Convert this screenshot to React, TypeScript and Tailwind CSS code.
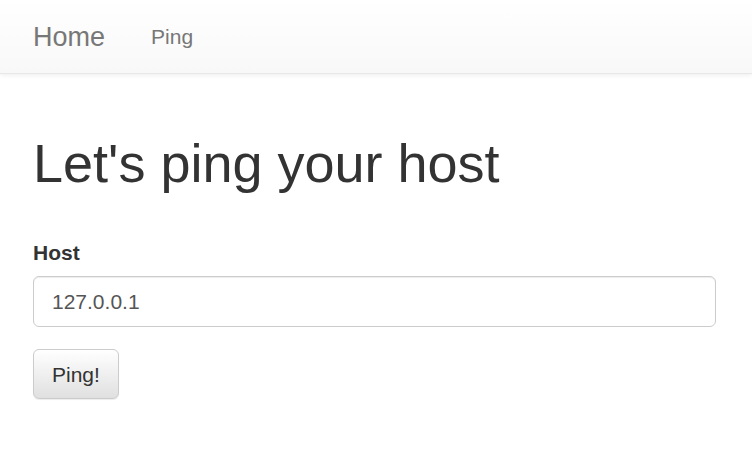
export default function App() {
  return (
    <div className="min-h-screen bg-white font-['Liberation_Sans',Arial,sans-serif] text-[#333]">
      {/* navbar */}
      <nav className="h-[74px] border-b border-[#e7e7e7] bg-gradient-to-b from-white to-[#f8f8f8] shadow-[inset_0_1px_0_rgba(255,255,255,0.15),0_1px_5px_rgba(0,0,0,0.075)]">
        <div className="flex h-full items-center pl-[33px]">
          <a className="text-[27px] leading-none text-[#777] pt-[2px]">Home</a>
          <a className="ml-[46px] text-[21px] leading-none text-[#777]">Ping</a>
        </div>
      </nav>

      <main className="pl-[33px] pr-[36px]">
        <h1 className="mt-[60px] text-[54px] leading-[1.1] font-normal">Let's ping your host</h1>

        <form className="mt-[45px]" onSubmit={(e) => e.preventDefault()}>
          <label className="block text-[21px] leading-[30px] font-bold">Host</label>
          <input
            className="mt-[8px] block h-[51px] w-full rounded-[6px] border border-[#ccc] px-[18px] text-[21px] text-[#555] shadow-[inset_0_1px_1px_rgba(0,0,0,0.075)] outline-none"
            defaultValue="127.0.0.1"
          />
          <button
            type="submit"
            className="mt-[22px] h-[50px] rounded-[6px] border border-[#ccc] bg-gradient-to-b from-white to-[#e0e0e0] px-[18px] text-[21px] text-[#333] shadow-[inset_0_1px_0_rgba(255,255,255,0.15),0_1px_1px_rgba(0,0,0,0.075)]"
          >
            Ping!
          </button>
        </form>
      </main>
    </div>
  );
}
